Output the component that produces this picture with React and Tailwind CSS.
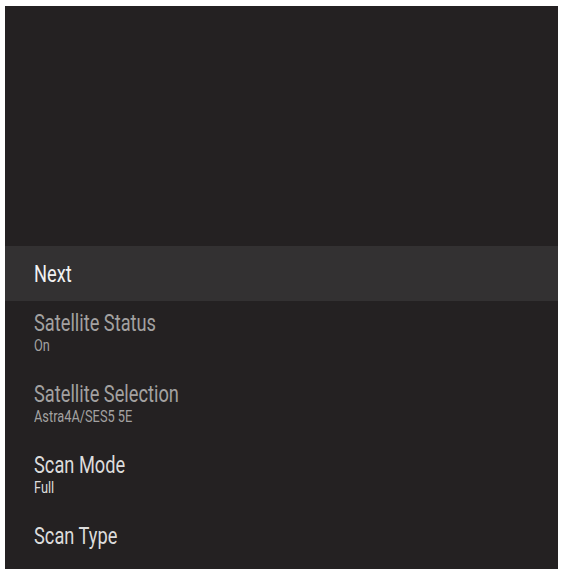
const items = [
  { title: "Satellite Status", value: "On", dim: true },
  { title: "Satellite Selection", value: "Astra4A/SES5 5E", dim: true },
  { title: "Scan Mode", value: "Full", dim: false },
  { title: "Scan Type", value: null, dim: false },
];

export default function App() {
  return (
    <div className="w-[563px] h-[576px] bg-white pt-[6px] pl-[5px] font-['Roboto',sans-serif]">
      <div className="w-[553px] h-[563px] bg-[#242122] flex flex-col overflow-hidden">
        <div className="h-[240px] shrink-0" />
        <div className="h-[55px] shrink-0 bg-[#333132] -ml-px flex items-center pl-[30px]">
          <span className="inline-block origin-left scale-x-[0.76] text-[24px] leading-none text-[#f2f2f2]">
            Next
          </span>
        </div>
        {items.map((it) => (
          <div key={it.title} className="h-[71px] shrink-0 pl-[29px] pt-[10px] flex flex-col items-start">
            <span
              className={
                "inline-block origin-left scale-x-[0.76] text-[24px] leading-[24px] " +
                (it.dim ? "text-[#a3a1a1]" : "text-[#dcdcdc]")
              }
            >
              {it.title}
            </span>
            {it.value && (
              <span
                className={
                  "inline-block origin-left scale-x-[0.8] mt-[2px] text-[16px] leading-[17px] " +
                  (it.dim ? "text-[#a3a1a1]" : "text-[#dcdcdc]")
                }
              >
                {it.value}
              </span>
            )}
          </div>
        ))}
      </div>
    </div>
  );
}
